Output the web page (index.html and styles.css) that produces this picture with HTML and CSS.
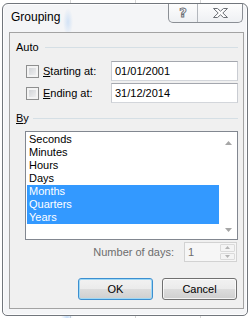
FILE: index.html
```html
<!DOCTYPE html>
<html lang="en">
<head>
    <meta charset="UTF-8">
    <title>Grouping</title>
    <link rel="stylesheet" href="styles.css">
</head>
<body>
    <div class="window">
        <div class="titlebar">
            <span class="title">Grouping</span>
            <div class="caption">
                <span class="cap-btn help">?</span>
                <span class="cap-btn close">
                    <svg width="15" height="10" viewBox="0 0 15 10">
                        <polygon points="0.5,0.5 4.5,0.5 7.5,3.2 10.5,0.5 14.5,0.5 9.8,5 14.5,9.5 10.5,9.5 7.5,6.8 4.5,9.5 0.5,9.5 5.2,5" fill="#fff" stroke="#6b6f75" stroke-width="1"/>
                    </svg>
                </span>
            </div>
        </div>
        <div class="client">
            <div class="group-head"><span>Auto</span><i class="rule"></i></div>
            <div class="field-row first">
                <label class="check"><span class="box"></span><span><u>S</u>tarting at:</span></label>
                <div class="textbox">01/01/2001</div>
            </div>
            <div class="field-row">
                <label class="check"><span class="box"></span><span><u>E</u>nding at:</span></label>
                <div class="textbox">31/12/2014</div>
            </div>

            <div class="group-head by"><span><u>B</u>y</span><i class="rule"></i></div>
            <div class="listbox">
                <ul class="items">
                    <li>Seconds</li>
                    <li>Minutes</li>
                    <li>Hours</li>
                    <li>Days</li>
                    <li class="selected">Months</li>
                    <li class="selected">Quarters</li>
                    <li class="selected">Years</li>
                </ul>
                <div class="scrollbar">
                    <span class="arrow"><svg width="7" height="4" viewBox="0 0 7 4"><polygon points="3.5,0 7,4 0,4" fill="#a6a6a6"/></svg></span>
                    <span class="arrow"><svg width="7" height="4" viewBox="0 0 7 4"><polygon points="0,0 7,0 3.5,4" fill="#a6a6a6"/></svg></span>
                </div>
            </div>

            <div class="days-row">
                <span class="muted">Number of days:</span>
                <div class="spin">
                    <span class="spin-value">1</span>
                    <div class="spin-btns">
                        <span><svg width="5" height="3" viewBox="0 0 5 3"><polygon points="2.5,0 5,3 0,3" fill="#b4b4b4"/></svg></span>
                        <span><svg width="5" height="3" viewBox="0 0 5 3"><polygon points="0,0 5,0 2.5,3" fill="#b4b4b4"/></svg></span>
                    </div>
                </div>
            </div>

            <div class="actions">
                <button class="btn default">OK</button>
                <button class="btn">Cancel</button>
            </div>
        </div>
    </div>
</body>
</html>
```

FILE: styles.css
```css
body {
    margin: 0;
    width: 251px;
    height: 318px;
    overflow: hidden;
    font-family: "Segoe UI", "Liberation Sans", sans-serif;
    font-size: 11px;
    color: #000000;
    background-color: #ffffff;
    background-image:
        radial-gradient(ellipse 6px 10px at 67px 318px, rgba(90, 160, 240, 0.35), transparent),
        linear-gradient(to right,
            transparent 70px, #d6d6d6 70px, #d6d6d6 71px, transparent 71px,
            transparent 135px, #d6d6d6 135px, #d6d6d6 136px, transparent 136px,
            transparent 200px, #d6d6d6 200px, #d6d6d6 201px, transparent 201px);
}

.window {
    box-sizing: border-box;
    width: 246px;
    height: 313px;
    margin: 3px 0 0 2px;
    border: 1px solid #71767c;
    border-radius: 6px 6px 5px 5px;
    background-color: #f4f5f7;
    background-image: radial-gradient(ellipse 5px 14px at 65px 18px, rgba(110, 170, 240, 0.25), transparent);
    box-shadow: inset 0 0 0 1px rgba(255, 255, 255, 0.8);
    display: flex;
    flex-direction: column;
}

.titlebar {
    height: 28px;
    display: flex;
    justify-content: space-between;
    align-items: flex-start;
    flex: none;
}

.title {
    padding: 5px 0 0 8px;
    font-size: 12px;
    line-height: 16px;
}

.caption {
    display: flex;
    height: 19px;
    margin-right: 4px;
    box-sizing: border-box;
    border: 1px solid #8b8f95;
    border-top: none;
    border-radius: 0 0 5px 5px;
    background: linear-gradient(#fdfdfd, #eef0f3);
}

.cap-btn {
    display: flex;
    align-items: center;
    justify-content: center;
}

.cap-btn.help {
    width: 28px;
    border-right: 1px solid #b3b7bd;
    font-family: "DejaVu Sans", sans-serif;
    font-weight: bold;
    font-size: 13px;
    line-height: 18px;
    color: #ffffff;
    -webkit-text-stroke: 0.9px #6b6f75;
}

.cap-btn.close {
    width: 44px;
}

.client {
    flex: none;
    box-sizing: border-box;
    height: 277px;
    margin: 0 3px 0 6px;
    padding: 0 5px 0 6px;
    border: 1px solid #a3a3a3;
    background-color: #f0f0f0;
    display: flex;
    flex-direction: column;
}

.group-head {
    display: flex;
    align-items: center;
    gap: 6px;
    height: 14px;
    line-height: 14px;
    margin-top: 7px;
}

.group-head.by {
    margin-top: 8px;
    gap: 4px;
}

.rule {
    flex: 1;
    height: 1px;
    background-color: #d5dfe5;
}

.field-row {
    display: flex;
    align-items: center;
    height: 20px;
    margin-top: 2px;
    padding-left: 10px;
}

.field-row.first {
    margin-top: 7px;
}

.check {
    display: flex;
    align-items: center;
    gap: 4px;
}

.box {
    box-sizing: border-box;
    width: 13px;
    height: 13px;
    border: 1px solid #8e8f8f;
    background: linear-gradient(135deg, #c9ccd0, #f6f6f6);
    box-shadow: inset 0 0 0 2px #f3f3f3;
}

.textbox {
    box-sizing: border-box;
    margin-left: auto;
    width: 127px;
    height: 20px;
    padding-left: 3px;
    line-height: 18px;
    border: 1px solid #abadb3;
    border-color: #a4a7ae #c9ccd2 #d3d6db #c9ccd2;
    background-color: #ffffff;
}

.listbox {
    box-sizing: border-box;
    display: flex;
    height: 109px;
    margin: 6px 0 0 9px;
    border: 1px solid #828790;
    background-color: #ffffff;
}

.items {
    flex: 1;
    list-style: none;
    margin: 0;
    padding: 1px 0 0 1px;
}

.items li {
    height: 13px;
    line-height: 13px;
    padding-left: 2px;
}

.items li.selected {
    background-color: #3399ff;
    color: #ffffff;
}

.scrollbar {
    width: 18px;
    display: flex;
    flex-direction: column;
    justify-content: space-between;
    padding: 2px 0 1px;
}

.arrow {
    height: 17px;
    display: flex;
    align-items: center;
    justify-content: center;
}

.days-row {
    display: flex;
    justify-content: flex-end;
    align-items: center;
    gap: 10px;
    height: 20px;
    margin-top: 2px;
    padding-right: 1px;
}

.muted {
    color: #6d6d6d;
}

.spin {
    box-sizing: border-box;
    width: 53px;
    height: 20px;
    display: flex;
    border: 1px solid #d2d2d2;
    background-color: #f6f6f6;
}

.spin-value {
    flex: 1;
    padding-left: 3px;
    line-height: 18px;
    color: #6d6d6d;
}

.spin-btns {
    width: 15px;
    display: flex;
    flex-direction: column;
    padding: 1px 1px 1px 0;
    gap: 1px;
}

.spin-btns span {
    flex: 1;
    display: flex;
    align-items: center;
    justify-content: center;
    border: 1px solid #dadada;
    border-radius: 1px;
    background-color: #f4f4f4;
}

.actions {
    display: flex;
    justify-content: flex-end;
    gap: 9px;
    margin-top: 16px;
    padding-right: 1px;
}

.btn {
    box-sizing: border-box;
    width: 75px;
    height: 22px;
    padding: 0;
    font-family: inherit;
    font-size: 11px;
    color: #000000;
    border: 1px solid #707070;
    border-radius: 3px;
    background: linear-gradient(#f2f2f2 0%, #ebebeb 50%, #dddddd 50%, #cfcfcf 100%);
    box-shadow: inset 0 0 0 1px rgba(255, 255, 255, 0.75);
}

.btn.default {
    border-color: #3c8fd0;
    box-shadow: inset 0 0 0 1px #9fd8f5;
}
```
